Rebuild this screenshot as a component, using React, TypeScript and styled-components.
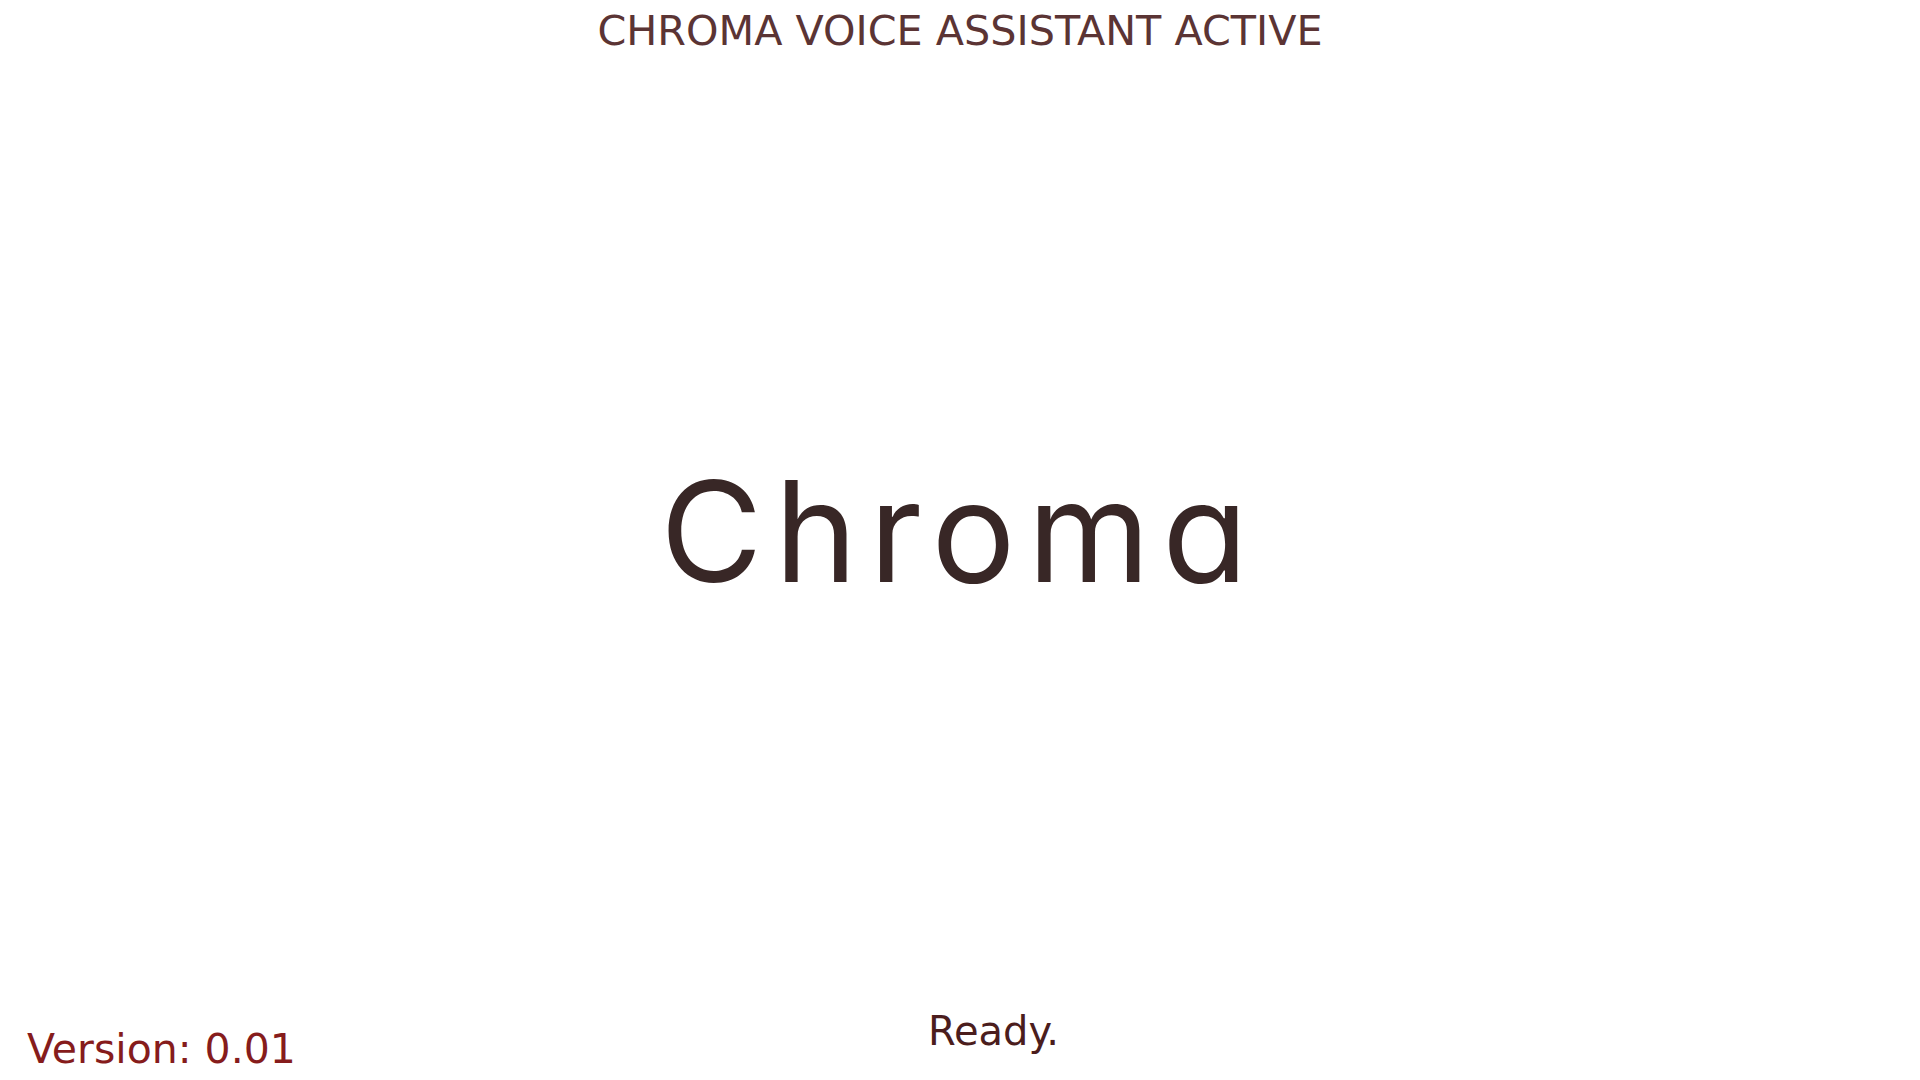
import React from "react";
import styled, { createGlobalStyle } from "styled-components";

const GlobalStyle = createGlobalStyle`
  html, body {
    margin: 0;
    padding: 0;
    background: #ffffff;
  }
  body {
    font-family: "DejaVu Sans", Verdana, sans-serif;
  }
`;

const Page = styled.div`
  width: 100%;
  height: 100vh;
  display: flex;
  flex-direction: column;
  overflow: hidden;
  background: #ffffff;
`;

const Header = styled.header`
  padding-top: 11px;
  text-align: center;
`;

const Title = styled.h1`
  margin: 0;
  font-family: "DejaVu Sans", Verdana, sans-serif;
  font-weight: 400;
  font-size: 41.3px;
  line-height: 1;
  color: #5b3434;
`;

const Center = styled.main`
  flex: 1;
  display: flex;
  align-items: center;
  justify-content: center;
  padding-bottom: 2px;
`;

const Logo = styled.div`
  font-family: Inter, "Noto Sans", sans-serif;
  font-feature-settings: "cv11" 1;
  font-weight: 400;
  font-size: 140px;
  line-height: 1;
  letter-spacing: 12px;
  color: #382726;
`;

const Footer = styled.footer`
  display: grid;
  grid-template-columns: 1fr auto 1fr;
  align-items: end;
  padding: 0 0 10px 27px;
`;

const FooterText = styled.div<{ $color: string; $size: number; $lift?: number; $shift?: number }>`
  font-family: "DejaVu Sans", Verdana, sans-serif;
  font-size: ${(p) => p.$size}px;
  line-height: 1;
  color: ${(p) => p.$color};
  margin-bottom: ${(p) => p.$lift ?? 0}px;
  margin-left: ${(p) => p.$shift ?? 0}px;
  white-space: nowrap;
`;

export default function App() {
  return (
    <>
      <GlobalStyle />
      <Page>
        <Header>
          <Title>CHROMA VOICE ASSISTANT ACTIVE</Title>
        </Header>
        <Center>
          <Logo>Chroma</Logo>
        </Center>
        <Footer>
          <FooterText $color="#861c1c" $size={41}>
            Version: 0.01
          </FooterText>
          <FooterText $color="#4b1d1d" $size={40} $lift={19} $shift={40}>
            Ready.
          </FooterText>
          <div />
        </Footer>
      </Page>
    </>
  );
}
